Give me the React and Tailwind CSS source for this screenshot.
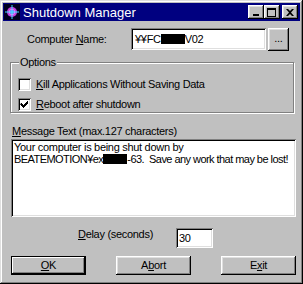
import React from 'react'

const font = { fontFamily: '"Liberation Sans", Arial, sans-serif' }

// raised win95 bevel
const raised =
  'bg-[#c0c0c0] shadow-[inset_-1px_-1px_0_#000,inset_1px_1px_0_#fff,inset_-2px_-2px_0_#808080,inset_2px_2px_0_#dfdfdf]'
// sunken field bevel
const sunken =
  'bg-white shadow-[inset_1px_1px_0_#808080,inset_-1px_-1px_0_#fff,inset_2px_2px_0_#000,inset_-2px_-2px_0_#dfdfdf]'

const Redact = ({ w }) => (
  <span className="inline-block bg-black h-[10px] align-[-1px]" style={{ width: w }} />
)

const AppIcon = () => (
  <svg width="16" height="16" viewBox="0 0 16 16" className="shrink-0">
    <rect width="16" height="16" fill="#000020" />
    <circle cx="8" cy="8" r="5" fill="#c040e0" />
    <circle cx="8" cy="8" r="3" fill="#ff80ff" />
    <rect x="6" y="6" width="4" height="4" fill="#8080ff" />
    <line x1="8" y1="1" x2="8" y2="15" stroke="#40e0ff" strokeWidth="1" />
    <line x1="1" y1="8" x2="15" y2="8" stroke="#40e0ff" strokeWidth="1" />
  </svg>
)

const TitleButton = ({ children, className = '' }) => (
  <div className={`${raised} w-[16px] h-[14px] flex items-center justify-center ${className}`}>
    {children}
  </div>
)

const CheckBox = ({ checked }) => (
  <div className={`${sunken} w-[13px] h-[13px] shrink-0 relative`}>
    {checked && (
      <svg width="13" height="13" viewBox="0 0 13 13" className="absolute left-0 top-0">
        <path d="M3 5h1v1h1v1h1v-1h1v-1h1v-1h1v-1h1v3h-1v1h-1v1h-1v1h-1v1h-1v-1h-1v-1h-1v-1h-1z" fill="#000" />
      </svg>
    )}
  </div>
)

const Button = ({ children, isDefault }) => (
  <div
    className={`w-[75px] h-[19px] flex items-center justify-center text-black ${
      isDefault
        ? 'bg-[#c0c0c0] border border-black shadow-[inset_-1px_-1px_0_#000,inset_1px_1px_0_#fff,inset_-2px_-2px_0_#808080]'
        : raised
    }`}
  >
    {children}
  </div>
)

export default function App() {
  return (
    <div
      className="w-[303px] h-[284px] bg-[#c0c0c0] p-[3px] text-[11px] tracking-[-0.3px] text-black shadow-[inset_-1px_-1px_0_#000,inset_1px_1px_0_#dfdfdf,inset_-2px_-2px_0_#808080,inset_2px_2px_0_#fff] flex flex-col"
      style={font}
    >
      {/* title bar */}
      <div className="h-[18px] bg-[#000080] flex items-center pl-[1px] pr-[2px] shrink-0">
        <AppIcon />
        <span className="ml-[3px] text-white text-[13px] tracking-[0px] flex-1 leading-none">
          Shutdown Manager
        </span>
        <TitleButton>
          <div className="w-[6px] h-[2px] bg-black mt-[6px] -ml-[1px]" />
        </TitleButton>
        <TitleButton>
          <div className="w-[9px] h-[9px] border border-black border-t-2 -ml-[1px]" />
        </TitleButton>
        <TitleButton className="ml-[2px]">
          <svg width="8" height="7" viewBox="0 0 8 7" className="-ml-[1px]">
            <path d="M0 0h2l2 2 2-2h2l-3 3.5 3 3.5h-2l-2-2-2 2h-2l3-3.5z" fill="#000" />
          </svg>
        </TitleButton>
      </div>

      {/* computer name */}
      <div className="flex mt-[7px] h-[23px]">
        <div className="ml-[24px] w-[104px] self-center">
          Computer <u>N</u>ame:
        </div>
        <div className={`${sunken} w-[135px] h-[22px] flex items-center pl-[4px]`}>
          ¥¥FC<Redact w={24} />V02
        </div>
        <div className={`${raised} ml-[2px] w-[21px] h-[23px] flex items-center justify-center pb-[2px]`}>
          ...
        </div>
      </div>

      {/* options group */}
      <div className="relative ml-[7px] mt-[11px] w-[284px] h-[51px] border border-[#808080] shadow-[inset_1px_1px_0_#fff,1px_1px_0_#fff] pt-[15px] pl-[7px] flex flex-col gap-[7px]">
        <span className="absolute left-[8px] -top-[8px] px-[1px] bg-[#c0c0c0] leading-[14px]">Options</span>
        <div className="flex items-center h-[13px]">
          <CheckBox />
          <span className="ml-[5px]">
            <u>K</u>ill Applications Without Saving Data
          </span>
        </div>
        <div className="flex items-center h-[13px]">
          <CheckBox checked />
          <span className="ml-[5px]">
            <u>R</u>eboot after shutdown
          </span>
        </div>
      </div>

      {/* message */}
      <div className="ml-[9px] mt-[11px] h-[15px] leading-[14px]">
        <u>M</u>essage Text (max.127 characters)
      </div>
      <div className={`${sunken} ml-[8px] w-[285px] h-[78px] pt-[2px] pl-[3px] leading-[12px] whitespace-nowrap overflow-hidden`}>
        <div>Your computer is being shut down by</div>
        <div className="tracking-[-0.55px]">
          BEATEMOTION¥ex<Redact w={24} />-63.&nbsp; Save any work that may be lost!
        </div>
      </div>

      {/* delay */}
      <div className="flex items-start mt-[11px] h-[20px]">
        <div className="ml-[75px] w-[98px] -mt-[1px] leading-[14px]">
          <u>D</u>elay (seconds)
        </div>
        <div className={`${sunken} w-[37px] h-[20px] flex items-center pl-[3px]`}>30</div>
      </div>

      {/* buttons */}
      <div className="flex mt-[8px] ml-[8px] gap-[30px]">
        <Button isDefault>
          <u>O</u>K
        </Button>
        <Button>
          A<u>b</u>ort
        </Button>
        <Button>
          E<u>x</u>it
        </Button>
      </div>
    </div>
  )
}
